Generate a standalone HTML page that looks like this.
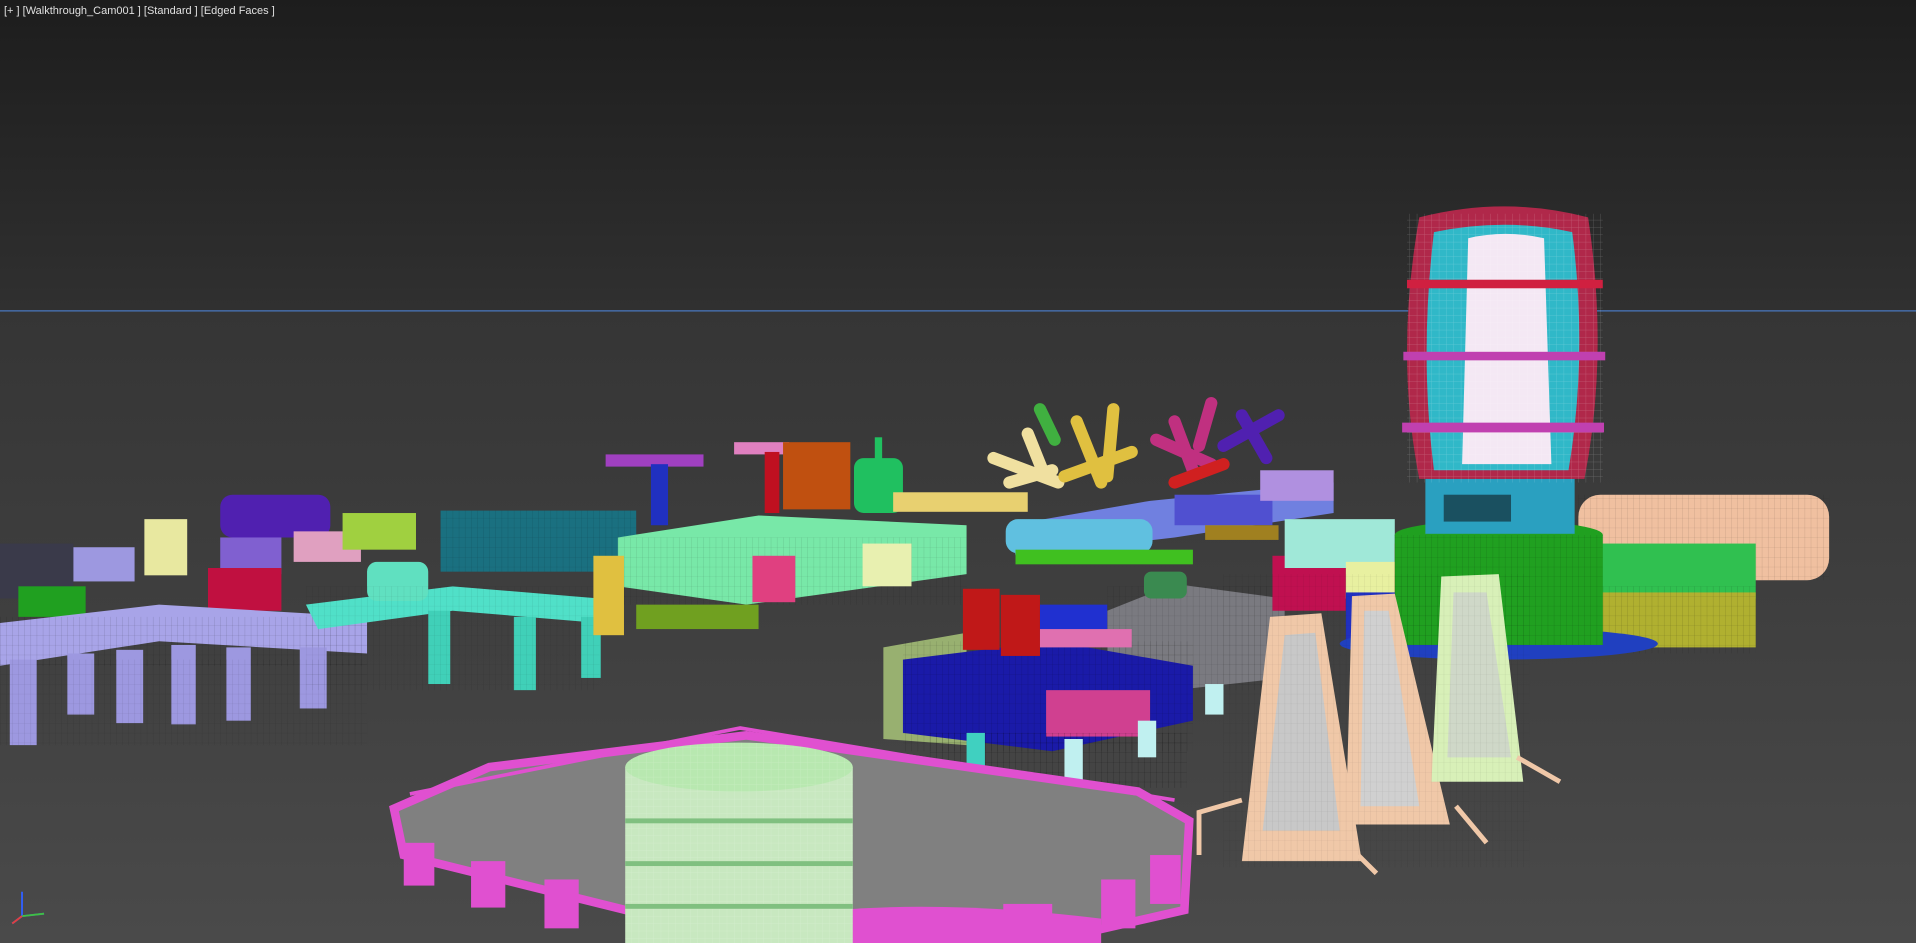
<!DOCTYPE html>
<html><head><meta charset="utf-8"><style>
html,body{margin:0;padding:0;width:1916px;height:943px;overflow:hidden;background:#2a2a2a}
svg{position:absolute;left:0;top:0}
.lbl{position:absolute;left:4px;top:5px;color:#e0e0e0;font:11px "Liberation Sans",sans-serif;white-space:pre}
</style></head><body>
<svg width="1916" height="943" viewBox="0 0 1566 772" preserveAspectRatio="none">
<defs>
<linearGradient id="bg" x1="0" y1="0" x2="0" y2="1">
<stop offset="0" stop-color="#1d1d1d"/><stop offset="0.33" stop-color="#303030"/>
<stop offset="0.331" stop-color="#353535"/><stop offset="1" stop-color="#4a4a4a"/></linearGradient>
<pattern id="grid" width="6" height="6" patternUnits="userSpaceOnUse"><path d="M0 0H6M0 0V6" stroke="#fff" stroke-width="0.6" opacity="0.35"/></pattern>
<pattern id="vl" width="5" height="8" patternUnits="userSpaceOnUse"><path d="M0 0V8" stroke="#000" stroke-width="0.6" opacity="0.35"/><path d="M0 0H5" stroke="#000" stroke-width="0.5" opacity="0.3"/></pattern>
</defs>
<rect width="1566" height="772" fill="url(#bg)"/>
<line x1="0" y1="254.5" x2="1566" y2="254.5" stroke="#4a78c0" stroke-width="1"/>

<!-- far left rides -->
<g>
<rect x="0" y="445" width="60" height="45" fill="#3a3a4a"/>
<rect x="60" y="448" width="50" height="28" fill="#9d98e0"/>
<rect x="118" y="425" width="35" height="46" fill="#e8e8a0"/>
<rect x="180" y="405" width="90" height="35" fill="#5020b0" rx="10"/>
<rect x="180" y="440" width="50" height="30" fill="#8060d0"/>
<rect x="240" y="435" width="55" height="25" fill="#e0a0c0"/>
<rect x="280" y="420" width="60" height="30" fill="#a0d040"/>
<rect x="170" y="465" width="60" height="35" fill="#c01040"/>
<rect x="15" y="480" width="55" height="25" fill="#20a020"/>
</g>
<!-- lavender bridge -->
<g>
<polygon points="0,510 130,495 300,505 300,535 130,525 0,545" fill="#a8a4e8"/>
<rect x="0" y="505" width="300" height="40" fill="url(#vl)" opacity="0.6"/>
<rect x="8" y="540" width="22" height="70" fill="#9d98e0"/>
<rect x="55" y="535" width="22" height="50" fill="#9d98e0"/>
<rect x="95" y="532" width="22" height="60" fill="#9d98e0"/>
<rect x="140" y="528" width="20" height="65" fill="#9d98e0"/>
<rect x="185" y="530" width="20" height="60" fill="#9d98e0"/>
<rect x="245" y="530" width="22" height="50" fill="#9d98e0"/>
<rect x="0" y="540" width="300" height="70" fill="url(#vl)" opacity="0.4"/>
</g>
<!-- teal bridge -->
<g>
<polygon points="250,495 370,480 490,490 490,510 370,500 260,515" fill="#50e0c8"/>
<rect x="350" y="500" width="18" height="60" fill="#40d0b8"/>
<rect x="420" y="505" width="18" height="60" fill="#40d0b8"/>
<rect x="475" y="505" width="16" height="50" fill="#40d0b8"/>
<rect x="300" y="460" width="50" height="32" fill="#60e0c0" rx="8"/>
<rect x="250" y="480" width="240" height="85" fill="url(#vl)" opacity="0.35"/>
</g>
<!-- teal/dark building -->
<rect x="360" y="418" width="160" height="50" fill="#1a7080"/>
<rect x="360" y="418" width="160" height="50" fill="url(#vl)" opacity="0.5"/>
<!-- carousel rides -->
<g>
<rect x="495" y="372" width="80" height="10" fill="#a040c0"/>
<rect x="532" y="380" width="14" height="50" fill="#2030c0"/>
<rect x="600" y="362" width="45" height="10" fill="#e080c0"/>
<rect x="625" y="370" width="12" height="50" fill="#c01020"/>
<rect x="640" y="362" width="55" height="55" fill="#c05010"/>
<rect x="698" y="375" width="40" height="45" fill="#20c060" rx="8"/>
<rect x="715" y="358" width="6" height="20" fill="#20c060"/>
</g>
<!-- green mid structure -->
<g>
<polygon points="505,440 620,422 790,430 790,470 610,495 505,480" fill="#78e8a8"/>
<rect x="505" y="440" width="285" height="55" fill="url(#vl)" opacity="0.45"/>
<rect x="730" y="403" width="110" height="16" fill="#e8d070"/>
<rect x="485" y="455" width="25" height="65" fill="#e0c040"/>
<rect x="615" y="455" width="35" height="38" fill="#e04080"/>
<rect x="705" y="445" width="40" height="35" fill="#e8f0b0"/>
<rect x="520" y="495" width="100" height="20" fill="#70a020"/>
</g>
<!-- fans -->
<g stroke-width="10" stroke-linecap="round">
<path d="M812,375 L865,395 M840,355 L852,385 M825,395 L860,385" stroke="#f0e0a0"/>
<path d="M850,335 L862,360" stroke="#40b040"/>
<path d="M880,345 L900,395 M870,390 L925,370 M910,335 L905,390" stroke="#e0c040"/>
<path d="M945,360 L990,380 M960,345 L975,385 M990,330 L980,365" stroke="#c03080"/>
<path d="M1000,365 L1045,340 M1015,340 L1035,375" stroke="#5020b0"/>
<path d="M960,395 L1000,380" stroke="#d02020"/>
</g>
<!-- right ride platform -->
<g>
<polygon points="825,430 940,410 1090,395 1090,420 960,440 830,455" fill="#7080e0"/>
<rect x="822" y="425" width="120" height="28" fill="#60c0e0" rx="10"/>
<rect x="960" y="405" width="80" height="25" fill="#5050d0"/>
<rect x="1030" y="385" width="60" height="25" fill="#b090e0"/>
<rect x="830" y="450" width="145" height="12" fill="#40c020"/>
<rect x="985" y="430" width="60" height="12" fill="#a08020"/>
</g>
<!-- grey building -->
<polygon points="905,500 960,478 1050,490 1050,555 960,565 905,540" fill="#7a7a80"/>
<rect x="905" y="480" width="145" height="85" fill="url(#vl)" opacity="0.5"/>
<rect x="935" y="468" width="35" height="22" fill="#3a8a50" rx="6"/>
<!-- blue building complex -->
<g>
<polygon points="722,530 790,518 790,610 722,605" fill="#98b070"/>
<polygon points="738,540 860,525 975,545 975,590 860,615 738,600" fill="#1a1aa8"/>
<rect x="738" y="525" width="237" height="90" fill="url(#vl)" opacity="0.6"/>
<rect x="855" y="565" width="85" height="38" fill="#d04090"/>
<rect x="787" y="482" width="30" height="50" fill="#c01818"/>
<rect x="818" y="487" width="32" height="50" fill="#c01818"/>
<rect x="850" y="495" width="55" height="30" fill="#2030d0"/>
<rect x="850" y="515" width="75" height="15" fill="#e070b0"/>
<rect x="760" y="600" width="210" height="45" fill="url(#vl)"/>
<rect x="790" y="600" width="15" height="30" fill="#40d0c0"/>
<rect x="870" y="605" width="15" height="35" fill="#c0f0f0"/>
<rect x="930" y="590" width="15" height="30" fill="#c0f0f0"/>
<rect x="985" y="560" width="15" height="25" fill="#c0f0f0"/>
</g>
<!-- right cluster -->
<g>
<rect x="1040" y="455" width="60" height="45" fill="#c01050"/>
<rect x="1050" y="425" width="90" height="40" fill="#a0e8d8"/>
<rect x="1100" y="460" width="50" height="30" fill="#e8f0a0"/>
<rect x="1140" y="445" width="60" height="55" fill="#e04040"/>
<rect x="1100" y="485" width="90" height="40" fill="#2030c0"/>
<rect x="1290" y="405" width="205" height="70" fill="#f0c0a0" rx="18"/>
<rect x="1290" y="405" width="205" height="70" fill="url(#vl)" opacity="0.5"/>
<rect x="1300" y="445" width="135" height="45" fill="#30c050"/>
<rect x="1300" y="485" width="135" height="45" fill="#b0b030"/>
<rect x="1300" y="480" width="135" height="55" fill="url(#vl)" opacity="0.6"/>
</g>
<!-- tower -->
<g>
<ellipse cx="1225" cy="527" rx="130" ry="13" fill="#2040c0"/>
<ellipse cx="1225" cy="438" rx="85" ry="12" fill="#20a020"/>
<rect x="1140" y="438" width="170" height="90" fill="#20a020"/>
<rect x="1140" y="438" width="170" height="90" fill="url(#vl)" opacity="0.6"/>
<rect x="1165" y="392" width="122" height="45" fill="#2aa0c0"/>
<rect x="1180" y="405" width="55" height="22" fill="#1a5060"/>
<path d="M1160,178 Q1230,160 1298,178 Q1315,290 1295,392 L1160,392 Q1140,290 1160,178 Z" fill="#b0284a"/>
<path d="M1172,190 Q1230,178 1285,190 Q1298,290 1282,385 L1172,385 Q1160,290 1172,190 Z" fill="#30b8c8"/>
<path d="M1200,195 Q1230,188 1262,195 L1268,380 L1195,380 Z" fill="#f4e8f4"/>
<rect x="1150" y="175" width="160" height="220" fill="url(#grid)" opacity="0.7"/>
<rect x="1150" y="229" width="160" height="7" fill="#d02040"/>
<rect x="1147" y="288" width="165" height="7" fill="#c040b0"/>
<rect x="1146" y="346" width="165" height="8" fill="#c040b0"/>
</g>
<!-- beige towers -->
<g>
<polygon points="1038,505 1080,502 1113,705 1015,705" fill="#f0c8a8"/>
<polygon points="1050,520 1075,518 1095,680 1032,680" fill="#c8c8c8"/>
<polygon points="1105,488 1140,486 1185,675 1100,675" fill="#f0c8a8"/>
<polygon points="1115,500 1135,500 1160,660 1112,660" fill="#d0d0d0"/>
<polygon points="1178,472 1225,470 1245,640 1170,640" fill="#d8f0b8"/>
<polygon points="1188,485 1215,485 1235,620 1183,620" fill="#cfd8c8"/>
<rect x="1000" y="470" width="250" height="240" fill="url(#vl)" opacity="0.3"/>
<path d="M980,700 L980,665 L1015,655 M1110,700 L1125,715 M1190,660 L1215,690 M1240,620 L1275,640" stroke="#f0c8a8" stroke-width="4" fill="none"/>
</g>
<!-- pink platform -->
<g>
<polygon points="322,662 400,628 610,602 930,648 972,672 968,745 850,772 620,772 330,700" fill="#808080"/>
<polygon points="322,662 400,628 610,602 930,648 972,672 968,745 850,772 620,772 330,700" fill="none" stroke="#e050d0" stroke-width="7"/>
<path d="M335,650 L605,596 L960,655" stroke="#e050d0" stroke-width="3" fill="none"/>
<rect x="330" y="690" width="25" height="35" fill="#e050d0"/>
<rect x="385" y="705" width="28" height="38" fill="#e050d0"/>
<rect x="445" y="720" width="28" height="40" fill="#e050d0"/>
<rect x="900" y="720" width="28" height="40" fill="#e050d0"/>
<rect x="940" y="700" width="25" height="40" fill="#e050d0"/>
<rect x="820" y="740" width="40" height="32" fill="#e050d0"/>
<path d="M655,748 Q760,735 900,752 L900,772 L655,772 Z" fill="#e050d0"/>
</g>
<!-- green cylinder -->
<g>
<rect x="511" y="628" width="186" height="144" fill="#c8e8c0"/>
<rect x="511" y="628" width="186" height="144" fill="url(#grid)" opacity="0.6"/>
<ellipse cx="604" cy="628" rx="93" ry="20" fill="#b8e8b0"/>
<ellipse cx="604" cy="628" rx="93" ry="20" fill="url(#grid)" opacity="0.6"/>
<rect x="511" y="670" width="186" height="4" fill="#80c080"/>
<rect x="511" y="705" width="186" height="4" fill="#80c080"/>
<rect x="511" y="740" width="186" height="4" fill="#80c080"/>
</g>
<!-- axis gizmo -->
<path d="M18,750 L18,730 M18,750 L36,748 M18,750 L10,756" stroke="#3060ff" stroke-width="1.5"/>
<path d="M18,750 L36,748" stroke="#40c040" stroke-width="1.5"/>
<path d="M18,750 L10,756" stroke="#e04040" stroke-width="1.5"/>
</svg>
<div class="lbl">[+ ] [Walkthrough_Cam001 ] [Standard ] [Edged Faces ]</div>
</body></html>
